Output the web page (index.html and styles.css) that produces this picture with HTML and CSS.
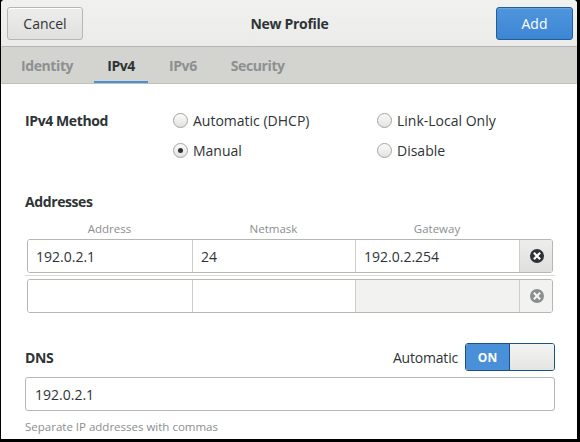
FILE: index.html
```html
<!DOCTYPE html>
<html>
<head>
<meta charset="utf-8">
<link rel="stylesheet" href="styles.css">
</head>
<body>
<div class="win">
  <header class="hb">
    <button class="btn">Cancel</button>
    <div class="title">New Profile</div>
    <button class="btn suggested">Add</button>
  </header>
  <nav class="tabs">
    <div class="tab">Identity</div>
    <div class="tab active">IPv4</div>
    <div class="tab">IPv6</div>
    <div class="tab">Security</div>
  </nav>
  <main class="content">
    <section class="method">
      <div class="strong">IPv4 Method</div>
      <label class="radio"><span class="dot"></span>Automatic (DHCP)</label>
      <label class="radio"><span class="dot"></span>Link-Local Only</label>
      <div></div>
      <label class="radio"><span class="dot checked"></span>Manual</label>
      <label class="radio"><span class="dot"></span>Disable</label>
    </section>

    <section class="addresses">
      <div class="strong heading">Addresses</div>
      <div class="cols">
        <div class="colh">Address</div>
        <div class="colh">Netmask</div>
        <div class="colh">Gateway</div>
        <div class="colbtn"></div>
      </div>
      <div class="arow">
        <div class="cell">192.0.2.1</div>
        <div class="cell">24</div>
        <div class="cell">192.0.2.254</div>
        <div class="rm">
          <svg width="14" height="14" viewBox="0 0 14 14"><circle cx="7" cy="7" r="7" fill="#2e3436"/><path d="M4.6 4.6 L9.4 9.4 M9.4 4.6 L4.6 9.4" stroke="#fff" stroke-width="2.1" stroke-linecap="square"/></svg>
        </div>
      </div>
      <div class="sep"></div>
      <div class="arow">
        <div class="cell"></div>
        <div class="cell"></div>
        <div class="cell disabled"></div>
        <div class="rm flat">
          <svg width="14" height="14" viewBox="0 0 14 14"><circle cx="7" cy="7" r="7" fill="#8b8e8f"/><path d="M4.6 4.6 L9.4 9.4 M9.4 4.6 L4.6 9.4" stroke="#f4f4f3" stroke-width="2.1" stroke-linecap="square"/></svg>
        </div>
      </div>
    </section>

    <section class="dns">
      <div class="dnshead">
        <div class="strong">DNS</div>
        <div class="auto">Automatic</div>
        <div class="switch"><span class="on">ON</span><span class="knob"></span></div>
      </div>
      <div class="entry">192.0.2.1</div>
      <div class="hint">Separate IP addresses with commas</div>
    </section>
  </main>
</div>
</body>
</html>
```

FILE: styles.css
```css
* { box-sizing: border-box; }
html, body { margin: 0; padding: 0; }
body {
  background: #000;
  width: 580px;
  height: 442px;
  font-family: "Open Sans", "Noto Sans", sans-serif;
  font-size: 14px;
  color: #2e3436;
}
.win {
  margin-left: 1px;
  width: 576px;
  height: 439px;
  background: #fff;
  border-radius: 4px 4px 0 0;
  overflow: hidden;
  display: flex;
  flex-direction: column;
}
.hb {
  height: 47px;
  flex: none;
  display: flex;
  align-items: center;
  padding: 0 4px 0 6px;
  background: linear-gradient(#f1f1f0, #ebebea);
  border-bottom: 1px solid #b6b6b3;
}
.btn {
  font: inherit;
  color: #2e3436;
  height: 33px;
  width: 76px;
  border: 1px solid #b6b6b3;
  border-radius: 3px;
  background: linear-gradient(#ededec, #e0e0de);
  padding: 0;
  box-shadow: inset 0 1px #fff;
}
.btn.suggested {
  width: 77px;
  color: #fff;
  background: linear-gradient(#4f95dd, #3d86d4);
  border-color: #215d9c;
  box-shadow: inset 0 1px rgba(255,255,255,0.15);
}
.title {
  flex: 1;
  text-align: center;
  font-weight: bold;
  letter-spacing: -0.3px;
}
.tabs {
  height: 37px;
  flex: none;
  display: flex;
  gap: 8px;
  padding-left: 7px;
  background: #d3d3d0;
  border-bottom: 1px solid #bfbfbc;
}
.tab {
  padding: 0 13px;
  display: flex;
  align-items: center;
  font-weight: bold;
  letter-spacing: -0.4px;
  color: #8d9091;
  border-bottom: 2px solid transparent;
  padding-top: 2px;
}
.tab.active {
  color: #2e3436;
  border-bottom-color: #4a90d9;
}
.content {
  padding: 0 22px 0 24px;
}
.strong { font-weight: bold; letter-spacing: -0.4px; }
.method {
  padding-top: 21px;
  display: grid;
  grid-template-columns: 148px 204px auto;
  grid-auto-rows: 30px;
  align-items: center;
}
.radio {
  display: flex;
  align-items: center;
  gap: 5px;
}
.dot {
  width: 15px;
  height: 15px;
  border-radius: 50%;
  border: 1px solid #a4a4a2;
  background: linear-gradient(#fbfbfa, #e2e2e0);
  display: flex;
  align-items: center;
  justify-content: center;
}
.dot.checked::after {
  content: "";
  width: 5px;
  height: 5px;
  border-radius: 50%;
  background: #2e3436;
}
.heading {
  margin-top: 27px;
  line-height: 20px;
}
.cols {
  display: grid;
  grid-template-columns: 165px 163px 164px 34px;
  margin: 9px 2px 2px;
  height: 16px;
}
.colh {
  text-align: center;
  font-size: 11.5px;
  line-height: 16px;
  color: #8b8e8f;
}
.arow {
  display: grid;
  grid-template-columns: 165px 163px 164px 34px;
  margin: 0 2px;
  height: 34px;
  border: 1px solid #b6b6b3;
  border-radius: 3px;
  overflow: hidden;
}
.cell {
  display: flex;
  align-items: center;
  padding-left: 8px;
  border-right: 1px solid #cdcdca;
  background: #fff;
}
.cell.disabled { background: #f2f2f1; }
.rm {
  display: flex;
  align-items: center;
  justify-content: center;
  background: linear-gradient(#ededec, #dfdfdd);
}
.rm.flat { background: #f2f2f1; }
.sep {
  height: 1px;
  background: #dadad7;
  margin: 2px 0 3px;
}
.dns { margin-top: 30px; }
.dnshead {
  display: flex;
  align-items: center;
  height: 28px;
}
.dnshead .strong { flex: 1; }
.auto { margin-right: 7px; letter-spacing: -0.2px; }
.switch {
  width: 90px;
  height: 28px;
  border: 1px solid #1c5187;
  border-radius: 3px;
  display: flex;
  overflow: hidden;
}
.switch .on {
  width: 43px;
  background: #4a90d9;
  color: #fff;
  font-weight: bold;
  font-size: 12px;
  display: flex;
  align-items: center;
  justify-content: center;
}
.switch .knob {
  flex: 1;
  border-left: 1px solid #1c5187;
  background: linear-gradient(#f4f4f3, #e4e4e2);
}
.entry {
  margin-top: 6px;
  height: 34px;
  border: 1px solid #b6b6b3;
  border-radius: 3px;
  display: flex;
  align-items: center;
  padding-left: 9px;
}
.hint {
  margin-top: 8px;
  font-size: 11.5px;
  line-height: 16px;
  color: #8b8e8f;
}
```
